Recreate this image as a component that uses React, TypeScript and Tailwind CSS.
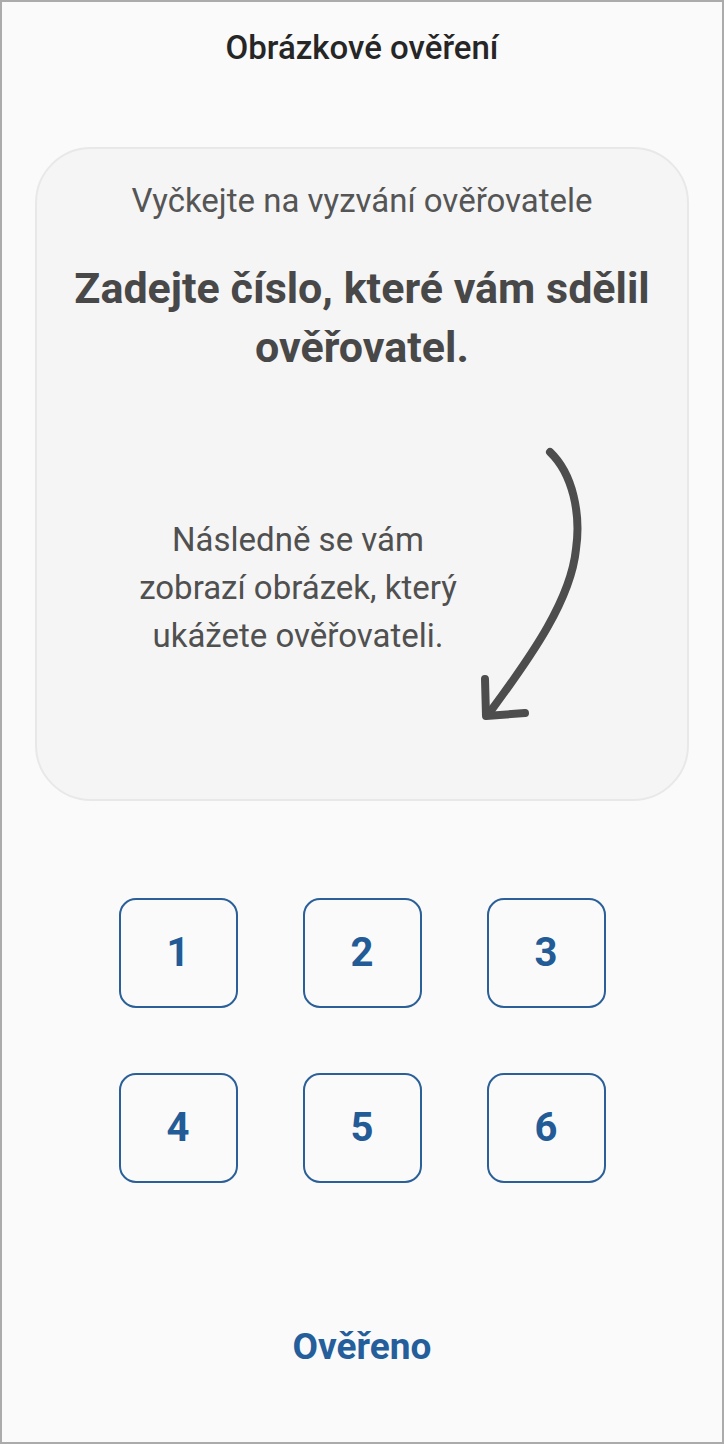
import React from "react";

const digits = ["1", "2", "3", "4", "5", "6"];

export default function App() {
  return (
    <div
      className="w-full h-[1444px] border-2 border-[#ababab] bg-[#fafafa] flex flex-col items-center"
      style={{ fontFamily: "Roboto, 'Noto Sans', sans-serif" }}
    >
      <h1 className="pt-[26px] text-[33px] leading-[40px] font-medium text-[#262626]">
        Obrázkové ověření
      </h1>

      <div className="mt-[79px] w-[654px] h-[654px] rounded-[56px] border-2 border-[#e8e8e8] bg-[#f5f5f5] flex flex-col items-center">
        <p className="pt-[32px] text-[33px] leading-[40px] text-[#555555]">
          Vyčkejte na vyzvání ověřovatele
        </p>
        <h2 className="mt-[38px] px-[20px] text-center text-[43px] leading-[59px] font-bold text-[#484848]">
          Zadejte číslo, které vám sdělil ověřovatel.
        </h2>
        <div className="mt-[62px] flex flex-row items-center justify-center gap-[8px]">
          <p className="mt-[8px] w-[334px] text-center text-[33px] leading-[48px] text-[#505050]">
            Následně se vám zobrazí obrázek, který ukážete ověřovateli.
          </p>
          <svg width="120" height="290" viewBox="0 0 120 290" fill="none">
            <path
              d="M77 13 C100 35 108 75 103 110 C98 160 60 215 17 273"
              stroke="#4d4d4d"
              strokeWidth="8"
              strokeLinecap="round"
              fill="none"
            />
            <path
              d="M12 240 L13 277 L52 274"
              stroke="#4d4d4d"
              strokeWidth="8"
              strokeLinecap="round"
              strokeLinejoin="round"
              fill="none"
            />
          </svg>
        </div>
      </div>

      <div className="mt-[97px] grid grid-cols-3 gap-x-[65px] gap-y-[65px]">
        {digits.map((d) => (
          <button
            key={d}
            className="w-[119px] h-[110px] rounded-[17px] border-2 border-[#2a5f98] bg-transparent flex items-center justify-center text-[40px] font-bold text-[#235b97]"
          >
            {d}
          </button>
        ))}
      </div>

      <button className="mt-[144px] text-[37px] leading-[40px] font-bold text-[#245e9b]">
        Ověřeno
      </button>
    </div>
  );
}
